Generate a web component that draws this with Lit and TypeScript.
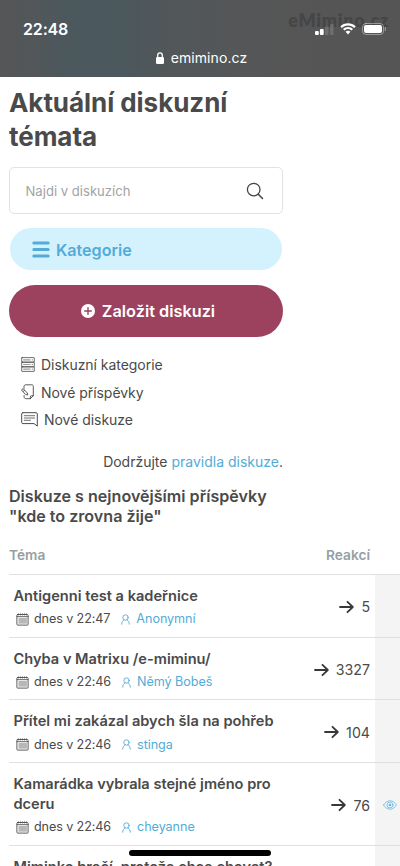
import { LitElement, html, css, svg, nothing } from "lit";
import { customElement } from "lit/decorators.js";

interface Topic {
  title: string;
  time: string;
  author: string;
  replies: string;
  watched?: boolean;
  tall?: boolean;
}

const topics: Topic[] = [
  { title: "Antigenni test a kadeřnice", time: "dnes v 22:47", author: "Anonymní", replies: "5" },
  { title: "Chyba v Matrixu /e-miminu/", time: "dnes v 22:46", author: "Němý Bobeš", replies: "3327" },
  { title: "Přítel mi zakázal abych šla na pohřeb", time: "dnes v 22:46", author: "stinga", replies: "104" },
  { title: "Kamarádka vybrala stejné jméno pro dceru", time: "dnes v 22:46", author: "cheyanne", replies: "76", watched: true, tall: true },
];

const icon = (w: number, h: number, body: unknown) =>
  html`<svg width=${w} height=${h} viewBox="0 0 ${w} ${h}" fill="none" stroke="currentColor" stroke-linecap="round" stroke-linejoin="round">${body}</svg>`;

const lock = icon(8, 12, svg`<rect x="0" y="5" width="8" height="7" rx="1.2" fill="currentColor" stroke="none"/><path d="M1.7 5.5V3.4a2.3 2.5 0 0 1 4.6 0v2.1" stroke-width="1.3"/>`);
const signal = icon(19, 12, svg`<g fill="currentColor" stroke="none"><rect x="0" y="8" width="3.8" height="4" rx="1"/><rect x="4.900" y="6" width="3.8" height="6" rx="1"/><rect x="10" y="3.4" width="3.6" height="8.6" rx="1" opacity=".15"/><rect x="15" y="1" width="3.6" height="11" rx="1" opacity=".15"/></g>`);
const wifi = icon(16, 12, svg`<g fill="currentColor" stroke="none"><path d="M8 .2c3 0 5.700 1.200 7.700 3.100l-1.500 1.600C12.600 3.300 10.400 2.400 8 2.400S3.400 3.300 1.800 4.900L.3 3.300C2.300 1.400 5 .2 8 .2z"/><path d="M8 4c2 0 3.700.8 5 2l-1.500 1.600C10.600 6.700 9.400 6.100 8 6.100s-2.600.6-3.500 1.500L3 6c1.300-1.200 3-2 5-2z"/><path d="M8 7.700c1 0 1.800.4 2.400 1L8 11.500 5.600 8.700c.6-.6 1.400-1 2.400-1z"/></g>`);
const battery = icon(25, 12, svg`<rect x=".5" y=".5" width="21" height="11" rx="3.400" opacity=".4"/><rect x="2" y="2" width="18" height="8" rx="2" fill="currentColor" stroke="none"/><path d="M23.300 4.500v3" opacity=".4" stroke-width="1.200"/>`);
const search = icon(18, 18, svg`<circle cx="7.700" cy="7.600" r="6.300" stroke-width="1.300"/><path d="M12.300 12.200l4.200 4.300" stroke-width="1.500"/>`);
const menu = icon(18, 17, svg`<path d="M1.900 2h14.200M1.900 8.500h14.200M1.900 15h14.200" stroke-width="3.200"/>`);
const plus = icon(14, 14, svg`<circle cx="7" cy="7" r="7" fill="#fff" stroke="none"/><path d="M7 3.700v6.600M3.700 7h6.600" stroke="#9c425f" stroke-width="1.400"/>`);
const cabinet = icon(14, 15, svg`<g stroke-width=".8"><rect x=".7" y=".6" width="12.600" height="4.600" rx=".4"/><rect x=".7" y="5.200" width="12.600" height="4.600" rx=".4"/><rect x=".7" y="9.800" width="12.600" height="4.600" rx=".4"/><path d="M2.600 2.900h6.500M2.600 7.500h6.500M2.600 12.100h6.500" stroke-width="1.200" opacity=".55"/><path d="M11.200 2.900h.2M11.200 7.500h.2M11.200 12.100h.2"/></g>`);
const scroll = icon(14, 16, svg`<g stroke-width=".9"><path d="M3 4.500V2.600C3 1.500 3.600.8 4.600.8h6.200c1 0 1.500.6 1.500 1.600v9.300l-3 3H5.100c-1.200 0-2-.7-2-1.800v-1.400"/><path d="M12.300 11.700h-1.700c-.8 0-1.300.5-1.300 1.300v1.700"/><path d="M.8 5.700l1.300-1 4.200 4.300.5 2-2.100-.6zM2.400 7.300l1.200-1"/></g>`);
const speech = icon(17, 15, svg`<path d="M1.800.7h13.400c.7 0 1.100.4 1.100 1.100v12.300l-3.300-2.500H1.800c-.7 0-1.100-.4-1.100-1.100V1.800C.7 1.100 1.100.7 1.800.7z"/><path d="M3.300 3.700h10.400M3.300 6h10.400M3.300 8.300h6.200" stroke-width=".8"/>`);
const calendar = icon(13, 13, svg`<rect x=".9" y="1.500" width="11.200" height="10.600" rx=".8" stroke-width=".9"/><rect x="2.500" y="4.800" width="8.400" height="5.900" fill="currentColor" stroke="none" opacity=".4"/><path d="M1 3.600h11" stroke-width=".8"/><path d="M2.600.8v1.200M4.600.8v1.200M6.500.8v1.200M8.500.8v1.200M10.500.8v1.200" stroke-width=".7"/>`);
const person = icon(9, 11, svg`<circle cx="4.500" cy="3.500" r="2.700" stroke-width=".9"/><path d="M3 6C1.600 6.700.8 8 .7 10.200M6 6c1.400.7 2.200 2 2.300 4.200" stroke-width=".9"/>`);
const arrow = icon(15, 14, svg`<path d="M1 7h12.500M8.500 1.800L13.800 7l-5.300 5.200" stroke-width="1.800"/>`);
const eye = icon(14, 10, svg`<path d="M.6 5C2.200 2.300 4.300.8 7 .8s4.800 1.500 6.400 4.200C11.800 7.700 9.700 9.200 7 9.200S2.200 7.700.6 5z" stroke-width=".8"/><circle cx="7" cy="5" r="3" stroke-width=".8"/><circle cx="7" cy="5" r="1.300" fill="currentColor" stroke="none"/>`);

@customElement("app-root")
export class AppRoot extends LitElement {
  static styles = css`
    :host { display: block; width: 400px; height: 866px; overflow: hidden; position: relative; background: #fff; color: #4a4a4a; font-family: Inter, "Liberation Sans", sans-serif; }
    * { box-sizing: border-box; }
    svg { display: block; flex: none; }
    h1, h2, h3, p, ul { margin: 0; padding: 0; }
    .top { height: 77px; position: relative; color: #fff; background: linear-gradient(90deg, #555657 0, #525759 35px, #4b585d 70px, #4b585d 120px, #525759 170px, #555657 260px, #555555 400px); }
    .brand { position: absolute; right: 11px; top: 9px; font: 800 18px/22px Lato, sans-serif; letter-spacing: .7px; color: #454647; }
    .status { display: flex; align-items: center; height: 41px; padding: 17px 13px 0 23px; position: relative; }
    .clock { flex: 1; font-size: 16px; font-weight: 600; letter-spacing: -.15px; }
    .signals { display: flex; gap: 6px; align-items: center; }
    .address { display: flex; justify-content: center; align-items: center; gap: 7px; padding: 7px 0 0 3px; font-size: 14px; line-height: 20px; letter-spacing: .1px; }
    .side { padding: 9px 0 0 9px; width: 283px; }
    h1 { font-size: 26px; line-height: 34px; font-weight: 700; letter-spacing: -.05px; }
    .search { display: flex; align-items: center; justify-content: space-between; height: 46.5px; margin-top: 13px; padding: 2px 18px 0 15.500px; border: 1px solid #e2e2e2; border-radius: 5px; font-size: 13.1px; color: #a3a3a3; }
    .search span { margin-top: -1px; }
    .search svg { color: #444; }
    .category { display: flex; align-items: center; gap: 6px; height: 42px; margin: 14.500px 1px 0; padding: 1px 0 0 22px; border-radius: 21px; background: #d4f1fe; color: #52acd6; font-size: 16.1px; font-weight: 600; }
    .create { display: flex; align-items: center; justify-content: center; gap: 7px; height: 52px; margin-top: 15px; padding-left: 4px; border-radius: 26px; background: #9c425f; color: #fff; font-size: 16.3px; font-weight: 600; }
    .links { list-style: none; margin-top: 14px; padding-left: 12px; font-size: 14px; letter-spacing: -.04px; }
    .links li { display: flex; align-items: center; gap: 6px; height: 27.5px; }
    .rules { margin-top: 18px; text-align: right; font-size: 14px; line-height: 20px; }
    .rules a, .author { color: #52acd6; }
    h2 { width: 275px; margin-top: 14px; font-size: 16.1px; line-height: 20px; font-weight: 600; white-space: nowrap; }
    .heads { display: flex; justify-content: space-between; margin-top: 19px; padding: 0 30px 9.400px 9px; font-size: 13.7px; line-height: 20px; font-weight: 600; color: #95a0a2; }
    .topic { display: grid; grid-template-columns: 273px 93px 25px; height: 62.7px; margin-left: 9px; border-top: 1.5px solid #e0e0e0; }
    .tall { height: 83px; }
    .body { padding: 11px 0 0 4.500px; }
    h3 { font-size: 14.6px; line-height: 20px; font-weight: 600; white-space: nowrap; }
    .tall h3 { white-space: normal; }
    .meta { display: flex; align-items: center; margin-top: 3.500px; padding-left: 2px; font-size: 12.6px; line-height: 20px; }
    .meta .time { margin: 0 11px 0 5.500px; letter-spacing: -.1px; }
    .meta .name { margin-left: 6px; letter-spacing: -.05px; }
    .replies { display: flex; align-items: center; justify-content: flex-end; gap: 7px; padding: 2.500px 5px 0 0; font-size: 14.2px; }
    .replies svg { color: #383838; }
    .watch { display: flex; align-items: center; padding: 2px 0 0 8px; background: #f4f4f4; color: #65b9df; }
    .peek { height: 21px; margin-left: 9px; border-top: 1.5px solid #e0e0e0; display: grid; grid-template-columns: 366px 25px; }
    .home { position: absolute; left: 129px; top: 850px; width: 142px; height: 6px; border-radius: 3px; background: #000; }
  `;

  render() {
    return html`
      <header class="top">
        <span class="brand">eMimino.cz</span>
        <div class="status"><span class="clock">22:48</span><span class="signals">${signal}${wifi}${battery}</span></div>
        <div class="address">${lock}<span>emimino.cz</span></div>
      </header>
      <section class="side">
        <h1>Aktuální diskuzní<br>témata</h1>
        <div class="search"><span>Najdi v diskuzích</span>${search}</div>
        <div class="category">${menu}<span>Kategorie</span></div>
        <div class="create">${plus}<span>Založit diskuzi</span></div>
        <ul class="links">
          <li>${cabinet}<span>Diskuzní kategorie</span></li>
          <li>${scroll}<span>Nové příspěvky</span></li>
          <li>${speech}<span>Nové diskuze</span></li>
        </ul>
        <p class="rules">Dodržujte <a>pravidla diskuze</a>.</p>
        <h2>Diskuze s nejnovějšími příspěvky<br>"kde to zrovna žije"</h2>
      </section>
      <div class="heads"><span>Téma</span><span>Reakcí</span></div>
      ${topics.map((t) => html`
        <article class="topic ${t.tall ? "tall" : ""}">
          <div class="body">
            <h3>${t.title}</h3>
            <div class="meta">${calendar}<span class="time">${t.time}</span><span class="author">${person}</span><span class="author name">${t.author}</span></div>
          </div>
          <div class="replies">${arrow}<span>${t.replies}</span></div>
          <div class="watch">${t.watched ? eye : nothing}</div>
        </article>`)}
      <article class="peek">
        <div class="body"><h3>Miminko brečí, protože chce chovat?</h3></div>
        <div class="watch"></div>
      </article>
      <div class="home"></div>
    `;
  }
}
